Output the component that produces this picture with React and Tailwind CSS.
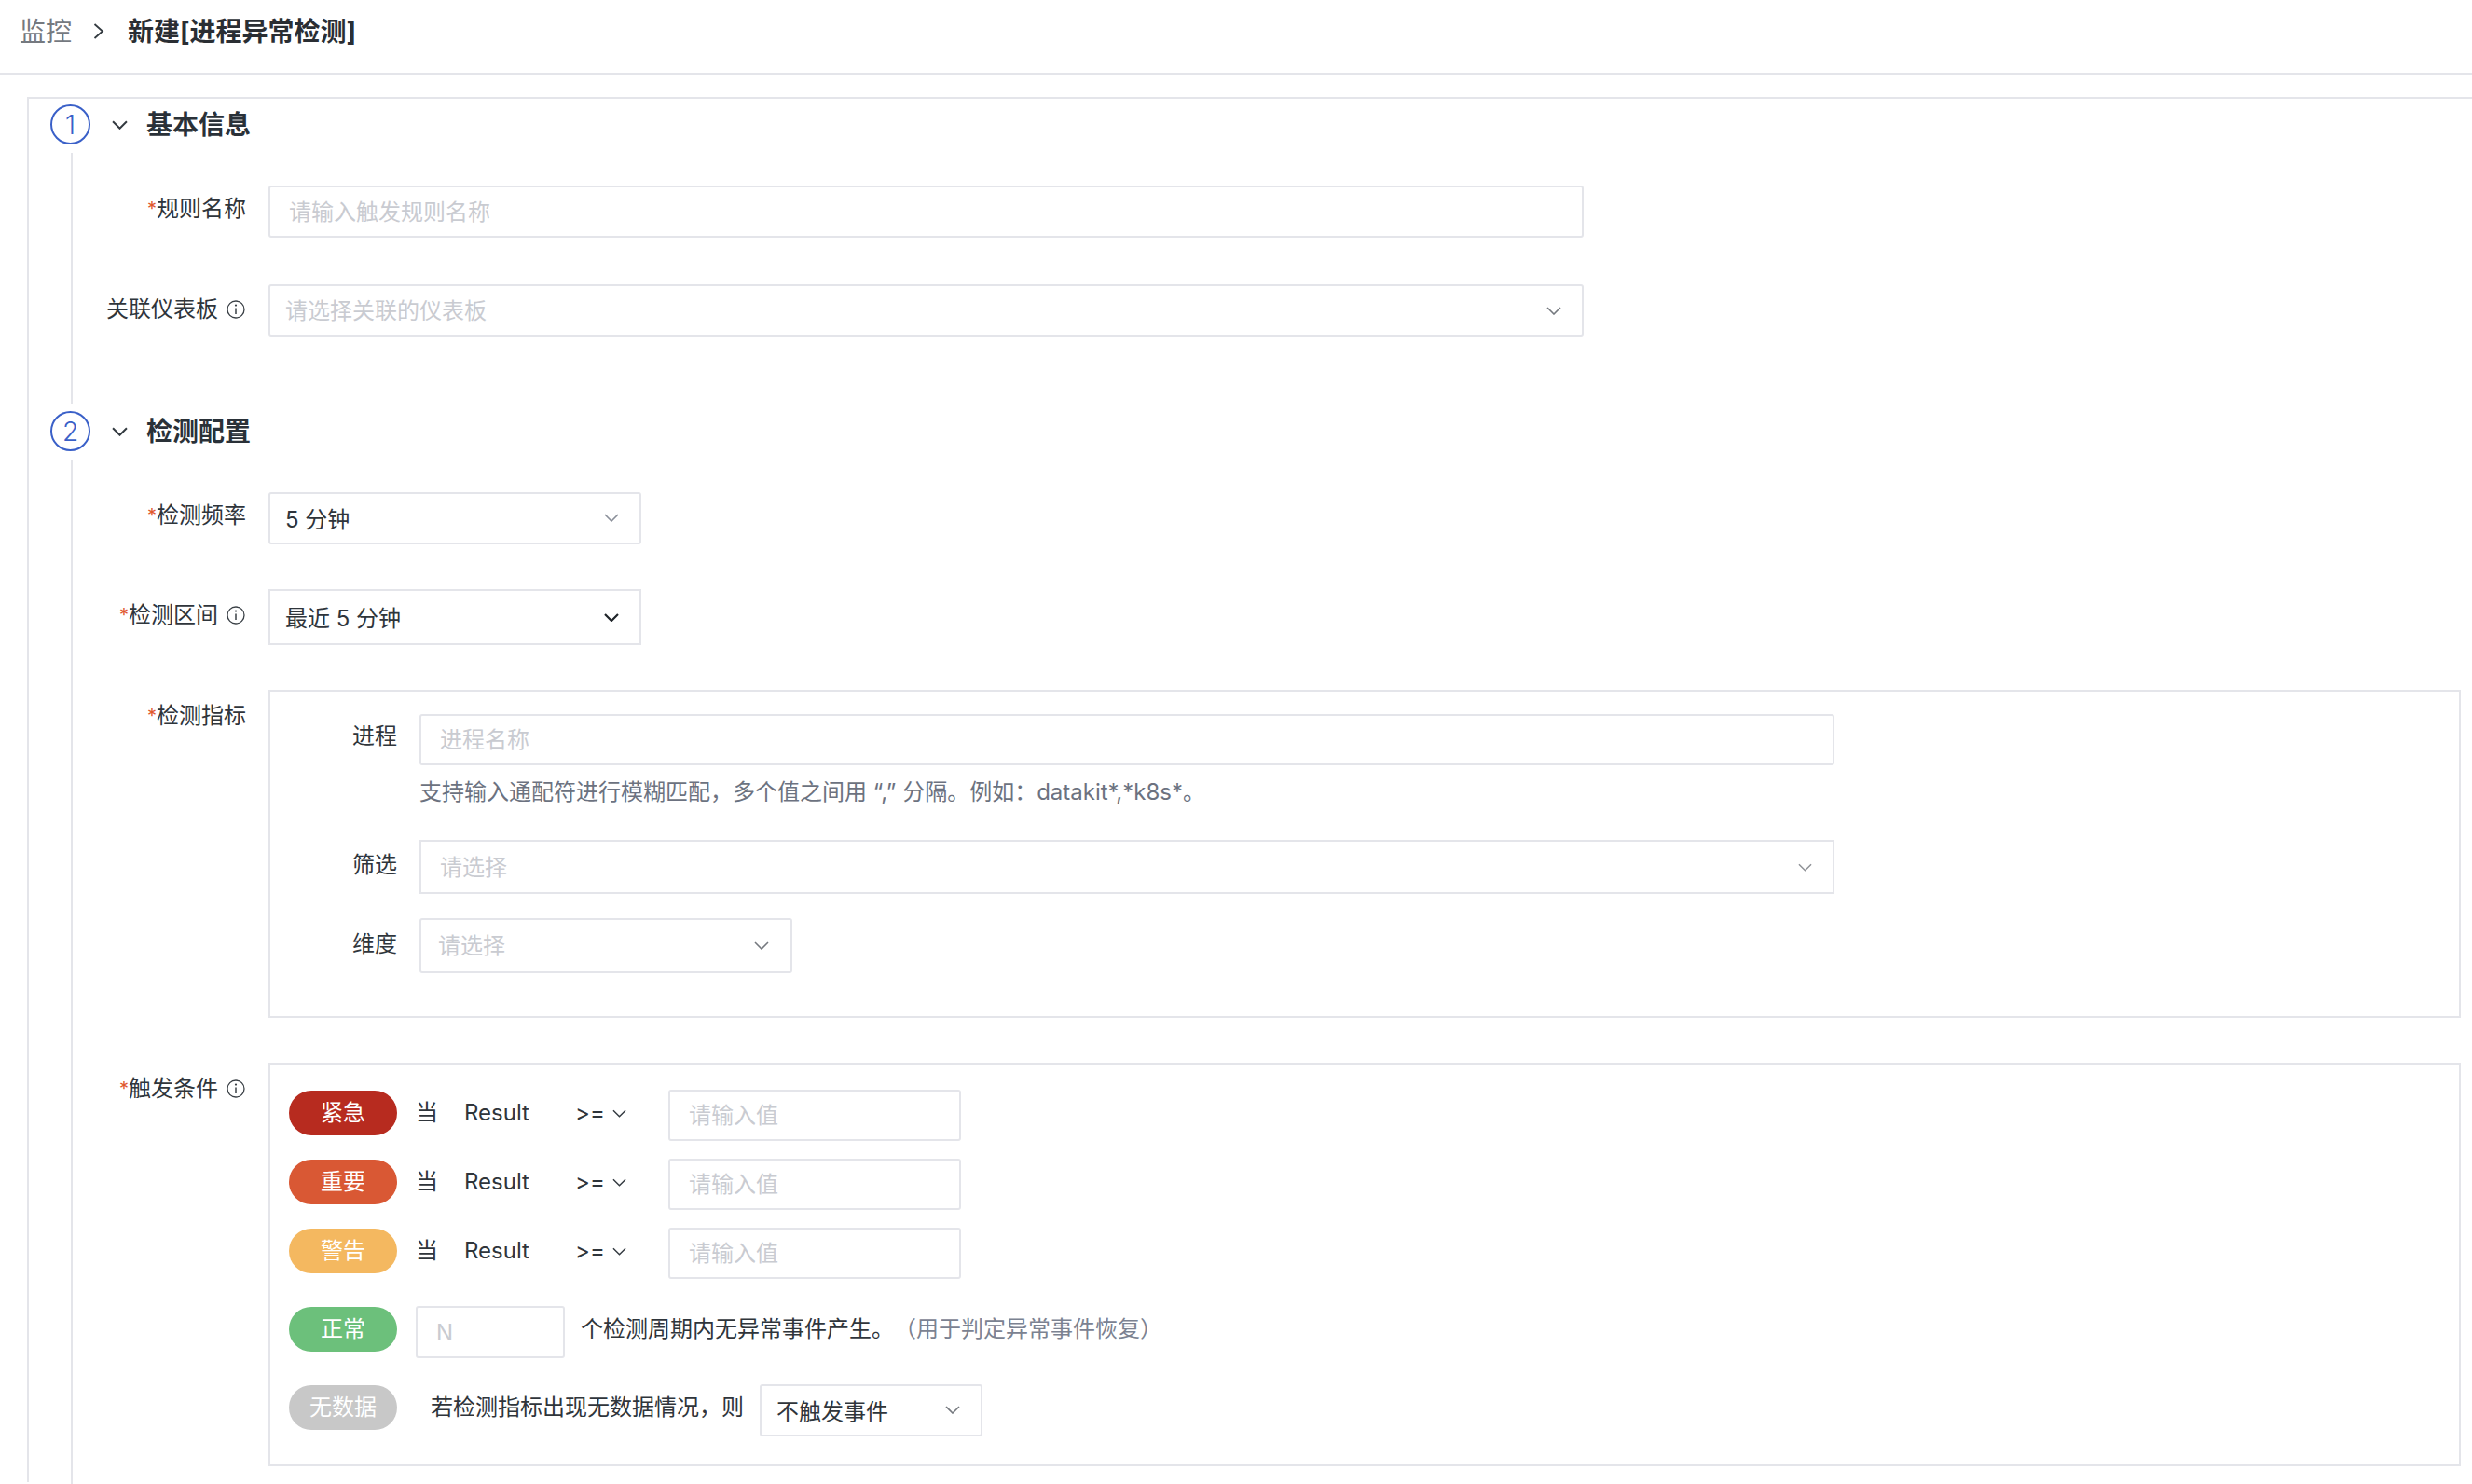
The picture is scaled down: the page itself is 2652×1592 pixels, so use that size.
const fontClass = "font-['Inter','Noto_Sans_CJK_SC',sans-serif]";

function Chevron({ w = 16, h = 9, color = "#8a8f99", stroke = 1.6, className = "" }) {
  return (
    <svg width={w} height={h} viewBox="0 0 16 9" fill="none" className={`shrink-0 ${className}`}>
      <path d="M1 1 L8 8 L15 1" stroke={color} strokeWidth={stroke} />
    </svg>
  );
}

function InfoIcon({ className = "" }) {
  return (
    <svg width="20" height="20" viewBox="0 0 20 20" fill="none" className={`shrink-0 ${className}`}>
      <circle cx="10" cy="10" r="9" stroke="#3a4046" strokeWidth="1.3" />
      <path d="M10 8.5 V15" stroke="#3a4046" strokeWidth="1.5" />
      <circle cx="10" cy="5.6" r="1.1" fill="#3a4046" />
    </svg>
  );
}

function Label({ children, required, info, className = "" }) {
  return (
    <div className={`w-[186px] shrink-0 mr-[24px] flex items-center justify-end leading-[32px] text-[24px] text-[#2f353b] whitespace-nowrap ${className}`}>
      {required && <span className="text-[#e0562e] text-[20px] leading-[20px]">*</span>}
      <span>{children}</span>
      {info && <InfoIcon className="ml-[9px] mr-[1px]" />}
    </div>
  );
}

function TextInput({ placeholder, className = "", pad = "pl-[20px]" }) {
  return (
    <input
      readOnly
      placeholder={placeholder}
      className={`border-2 border-[#e4e5ea] rounded-[3px] bg-white outline-none text-[24px] placeholder:text-[#c9cbd1] ${pad} ${className}`}
    />
  );
}

function Select({ children, placeholder, className = "", chevron = {}, chevronClass = "mr-[19px]", pad = "pl-[16px]", square }) {
  return (
    <div className={`border-2 border-[#e4e5ea] ${square ? "" : "rounded-[3px]"} bg-white flex items-center justify-between text-[24px] ${pad} ${className}`}>
      <span className={children ? "text-[#2f353b] pt-[3px]" : "text-[#c9cbd1] pt-[1px]"}>{children || placeholder}</span>
      <Chevron {...chevron} className={chevronClass} />
    </div>
  );
}

function Step({ n, title }) {
  return (
    <div className="flex items-center h-[43px] pl-[23px]">
      <div className="w-[43px] h-[43px] rounded-full border-2 border-[#3a60c8] text-[#3a60c8] text-[28px] font-light flex items-center justify-center leading-none shrink-0">
        {n}
      </div>
      <Chevron w={17} h={10} color="#333a40" stroke={1.9} className="ml-[23px]" />
      <div className="ml-[20px] text-[28px] font-bold text-[#2a3138] leading-none">{title}</div>
    </div>
  );
}

function Badge({ color, children }) {
  return (
    <div className={`w-[116px] h-[48px] shrink-0 rounded-[24px] ${color} text-white text-[24px] flex items-center justify-center`}>
      {children}
    </div>
  );
}

function ConditionRow({ color, label, className = "" }) {
  return (
    <div className={`flex items-start text-[#2f353b] text-[24px] ${className}`}>
      <div className="mt-[1px]"><Badge color={color}>{label}</Badge></div>
      <div className="ml-[20px] w-[52px] h-[50px] flex items-center">当</div>
      <div className="w-[119px] h-[50px] flex items-center">Result</div>
      <div className="w-[100px] h-[50px] flex items-center">
        <span>&gt;=</span>
        <Chevron w={15} h={9} color="#333a40" stroke={1.5} className="ml-[8px]" />
      </div>
      <TextInput placeholder="请输入值" className="w-[314px] h-[55px]" />
    </div>
  );
}

export default function App() {
  return (
    <div className={`w-[2652px] h-[1592px] overflow-hidden bg-white ${fontClass}`}>
      <header className="h-[80px] border-b-2 border-[#e4e5ea] flex items-center pl-[21px] pb-[11px] text-[28px]">
        <span className="text-[#75797f]">监控</span>
        <svg width="12" height="17" viewBox="0 0 12 17" fill="none" className="ml-[23px] mr-[25px]">
          <path d="M1.5 1 L10 8.5 L1.5 16" stroke="#333a40" strokeWidth="1.8" />
        </svg>
        <span className="font-bold text-[#2a2e33]">新建[进程异常检测]</span>
      </header>

      <main className="pt-[24px] pl-[29px]">
        <div className="border-l-2 border-t-2 border-[#e4e5ea] h-[1486px] pt-[6px]">
          <Step n="1" title="基本信息" />
          <section className="ml-[45px] mt-[9px] border-l-2 border-[#e4e5ea] h-[269px] pt-[35px]">
            <div className="flex items-start">
              <Label required className="pt-[9px]">规则名称</Label>
              <TextInput placeholder="请输入触发规则名称" className="w-[1411px] h-[56px]" />
            </div>
            <div className="flex items-start mt-[50px]">
              <Label info className="pt-[11px]">关联仪表板</Label>
              <Select placeholder="请选择关联的仪表板" className="w-[1411px] h-[56px]" chevron={{ color: "#75797f" }} chevronClass="mr-[22px]" />
            </div>
          </section>

          <div className="mt-[8px]">
            <Step n="2" title="检测配置" />
          </div>
          <section className="ml-[45px] mt-[9px] border-l-2 border-[#e4e5ea] h-[1100px] pt-[35px]">
            <div className="flex items-start">
              <Label required className="pt-[9px]">检测频率</Label>
              <Select className="w-[400px] h-[56px]" chevron={{ color: "#8a8f99" }} chevronClass="mr-[22px] -mt-[2px]">5 分钟</Select>
            </div>
            <div className="flex items-start mt-[48px]">
              <Label required info className="pt-[12px]">检测区间</Label>
              <Select square className="w-[400px] h-[60px]" chevron={{ color: "#1f2429", stroke: 2.2 }} chevronClass="mr-[22px]">最近 5 分钟</Select>
            </div>

            <div className="flex items-start mt-[48px]">
              <Label required className="pt-[12px]">检测指标</Label>
              <div className="w-[2352px] h-[352px] border-2 border-[#e4e5ea] pt-[24px]">
                <div className="flex items-start">
                  <div className="w-[136px] mr-[24px] text-right text-[24px] leading-[32px] pt-[8px] text-[#2f353b]">进程</div>
                  <div>
                    <TextInput placeholder="进程名称" className="w-[1518px] h-[55px] block" />
                    <div className="mt-[13px] text-[24px] leading-[32px] text-[#6c7280] whitespace-nowrap">
                      支持输入通配符进行模糊匹配，多个值之间用 “,” 分隔。例如：datakit*,*k8s*。
                    </div>
                  </div>
                </div>
                <div className="flex items-start mt-[35px]">
                  <div className="w-[136px] mr-[24px] text-right text-[24px] leading-[32px] pt-[11px] text-[#2f353b]">筛选</div>
                  <Select square placeholder="请选择" className="w-[1518px] h-[58px]" pad="pl-[20px]" chevron={{ w: 15, color: "#8f9297" }} chevronClass="mr-[22px]" />
                </div>
                <div className="flex items-start mt-[26px]">
                  <div className="w-[136px] mr-[24px] text-right text-[24px] leading-[32px] pt-[12px] text-[#2f353b]">维度</div>
                  <Select placeholder="请选择" className="w-[400px] h-[59px]" pad="pl-[18px]" chevron={{ color: "#75797f" }} chevronClass="mr-[23px]" />
                </div>
              </div>
            </div>

            <div className="flex items-start mt-[48px]">
              <Label required info className="pt-[12px]">触发条件</Label>
              <div className="w-[2352px] h-[433px] border-2 border-[#e4e5ea] pt-[27px] pl-[20px]">
                <ConditionRow color="bg-[#b72b1f]" label="紧急" />
                <ConditionRow color="bg-[#d95834]" label="重要" className="mt-[19px]" />
                <ConditionRow color="bg-[#f4b860]" label="警告" className="mt-[19px]" />
                <div className="flex items-start mt-[29px] text-[24px]">
                  <div className="mt-[1px]"><Badge color="bg-[#6cc07b]">正常</Badge></div>
                  <TextInput placeholder="N" className="ml-[20px] w-[160px] h-[56px]" />
                  <div className="ml-[17px] h-[50px] flex items-center text-[#2f353b] whitespace-nowrap">
                    个检测周期内无异常事件产生。<span className="text-[#7b8291]">（用于判定异常事件恢复）</span>
                  </div>
                </div>
                <div className="flex items-start mt-[28px] text-[24px]">
                  <div className="mt-[1px]"><Badge color="bg-[#c8c8c8]">无数据</Badge></div>
                  <div className="ml-[36px] w-[353px] h-[50px] flex items-center text-[#2f353b] whitespace-nowrap">
                    若检测指标出现无数据情况，则
                  </div>
                  <Select className="w-[239px] h-[56px]" chevron={{ color: "#75797f" }} chevronClass="mr-[22px] -mt-[2px]">不触发事件</Select>
                </div>
              </div>
            </div>
          </section>
        </div>
      </main>
    </div>
  );
}
